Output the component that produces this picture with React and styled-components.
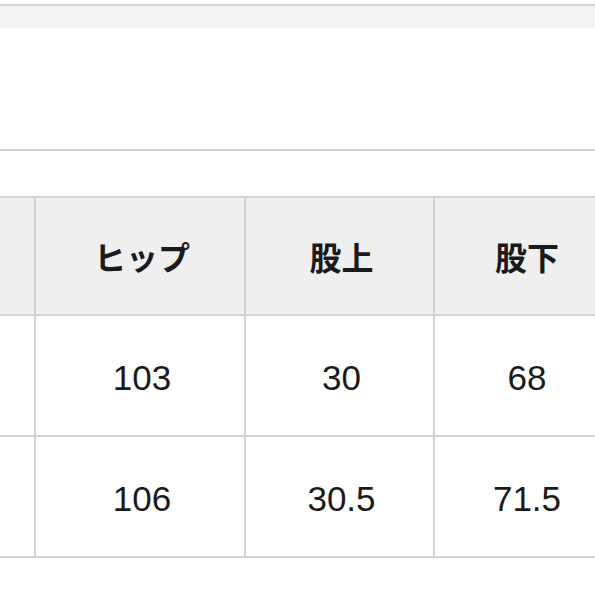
import React from "react";
import styled, { createGlobalStyle } from "styled-components";

const GlobalStyle = createGlobalStyle`
  body {
    margin: 0;
    background: #fff;
    overflow: hidden;
    font-family: "Liberation Sans", "Noto Sans CJK JP", sans-serif;
    color: #1a1a1a;
  }
`;

const Page = styled.div`
  width: 595px;
  height: 595px;
  overflow: hidden;
`;

const TopBand = styled.div`
  margin-top: 4px;
  height: 22px;
  border-top: 2px solid #d2d2d2;
  background: #f2f2f2;
`;

const Spacer = styled.div`
  height: ${(p) => p.h}px;
`;

const Divider = styled.div`
  height: 0;
  border-top: 2px solid #d2d2d2;
`;

const Grid = styled.div`
  display: grid;
  grid-template-columns: 185px 210px 189px 182px;
  width: 766px;
  margin-left: -149px;
  border-top: 2px solid #d2d2d2;
`;

const Cell = styled.div`
  box-sizing: border-box;
  height: ${(p) => (p.head ? 118 : 121)}px;
  border-right: 2px solid #d2d2d2;
  border-bottom: 2px solid #d2d2d2;
  background: ${(p) => (p.head ? "#efefef" : "#fff")};
  display: flex;
  align-items: center;
  justify-content: center;
  padding-left: 4px;
  padding-top: ${(p) => (p.head ? 0 : 4)}px;
  font-family: ${(p) =>
    p.head
      ? '"Noto Sans CJK JP", sans-serif'
      : '"Liberation Sans", "Noto Sans CJK JP", sans-serif'};
  font-size: ${(p) => (p.head ? 32 : 35)}px;
  font-weight: ${(p) => (p.head ? 700 : 400)};
  color: #1a1a1a;
`;

const head = ["ウエスト", "ヒップ", "股上", "股下"];
const rows = [
  ["72", "103", "30", "68"],
  ["76", "106", "30.5", "71.5"],
];

export default function App() {
  return (
    <Page>
      <GlobalStyle />
      <TopBand />
      <Spacer h={121} />
      <Divider />
      <Spacer h={45} />
      <Grid>
        {head.map((h, i) => (
          <Cell head key={"h" + i}>
            {i === 0 ? "" : h}
          </Cell>
        ))}
        {rows.map((r, ri) =>
          r.map((v, i) => <Cell key={ri + "-" + i}>{i === 0 ? "" : v}</Cell>)
        )}
      </Grid>
    </Page>
  );
}
